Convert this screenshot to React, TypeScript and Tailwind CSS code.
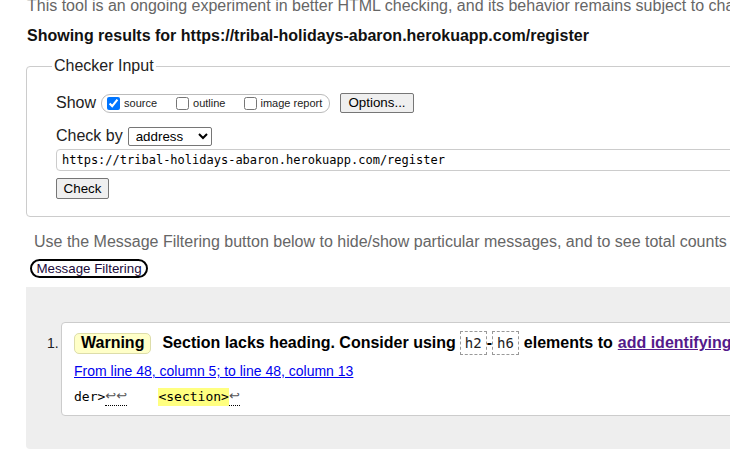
import React from "react";

export default function App() {
  const mono = "font-['DejaVu_Sans_Mono','Liberation_Mono',monospace]";
  return (
    <div className="w-[730px] h-[455px] overflow-hidden bg-white font-['Liberation_Sans',Arial,sans-serif] text-[16px] text-black">
      <div className="w-[1000px] pl-[26px]">
        <p className="mt-[-3px] ml-[1px] leading-[18px] text-[#666] whitespace-nowrap">
          This tool is an ongoing experiment in better HTML checking, and its behavior remains subject to change
        </p>
        <p className="mt-[12px] ml-[1px] leading-[18px] font-bold text-[#111] whitespace-nowrap">
          Showing results for https://tribal-holidays-abaron.herokuapp.com/register
        </p>
        <fieldset className="mt-[12px] border border-[#ccc] rounded-[4px] pl-[29px] pt-[18px] pb-[17px] w-[900px]">
          <legend className="ml-[-4px] px-[2px] leading-[18px] text-[#222]">Checker Input</legend>
          <div className="flex items-center h-[20px]">
            <span className="leading-[18px] text-[#222]">Show</span>
            <div className="ml-[5px] flex items-center h-[19px] w-[229px] border border-[#bbb] rounded-[9px] pl-[5px] text-[11px] text-[#222]">
              <input type="checkbox" defaultChecked readOnly className="w-[13px] h-[13px] m-0 accent-[#0075ff]" />
              <span className="ml-[4px] mt-[1px]">source</span>
              <input type="checkbox" readOnly className="ml-[19px] w-[13px] h-[13px] m-0" />
              <span className="ml-[4px] mt-[1px]">outline</span>
              <input type="checkbox" readOnly className="ml-[19px] w-[13px] h-[13px] m-0" />
              <span className="ml-[3px] mt-[1px]">image report</span>
            </div>
            <button className="ml-[10px] h-[20px] w-[74px] border border-[#767676] rounded-[2px] bg-[#efefef] text-[13.33px] text-black leading-[16px]">
              Options...
            </button>
          </div>
          <div className="flex items-center h-[20px] mt-[13px]">
            <span className="leading-[18px] text-[#222]">Check by</span>
            <select
              defaultValue="address"
              className="ml-[5px] h-[19px] w-[84px] border border-[#767676] rounded-[2px] bg-white text-[13.33px] pl-[3px] appearance-auto"
            >
              <option value="address">address</option>
            </select>
          </div>
          <div className="mt-[3px] flex items-center h-[22px] border border-[#ccc] rounded-l-[4px] pl-[5px] w-[900px]">
            <span className={`${mono} text-[12px] text-black whitespace-nowrap`}>
              https://tribal-holidays-abaron.herokuapp.com/register
            </span>
          </div>
          <button className="mt-[7px] h-[21px] w-[53px] border border-[#767676] rounded-[2px] bg-[#efefef] text-[13.33px] text-black leading-[16px] block">
            Check
          </button>
        </fieldset>
        <p className="mt-[16px] ml-[8px] leading-[18px] text-[#666] whitespace-nowrap">
          Use the Message Filtering button below to hide/show particular messages, and to see total counts of errors and warnings.
        </p>
        <button className="mt-[8px] ml-[4px] h-[19px] w-[118px] border-2 border-black rounded-full bg-white text-[13.33px] leading-[14px] text-[#1a0a3a] block">
          Message Filtering
        </button>
        <div className="mt-[9px] h-[162px] w-[900px] bg-[#eee] rounded-bl-[4px] flex pl-[21px] pt-[35px]">
          <div className="w-[14px] mt-[13px] text-[14px] leading-[16px] text-[#222]">1.</div>
          <div className="flex-1 h-[94px] bg-white border border-[#ccc] rounded-[4px] pl-[12px] pt-[8px]">
            <div className="flex items-center h-[24px] font-bold whitespace-nowrap">
              <span className="h-[21px] px-[6px] flex items-center bg-[#ffffc8] border border-[#ddddaa] rounded-[5px] leading-[18px]">
                Warning
              </span>
              <span className="ml-[11px]">Section lacks heading. Consider using</span>
              <code className={`${mono} font-normal ml-[4px] h-[24px] px-[4px] flex items-center border border-dashed border-[#999] text-[14px] text-[#222]`}>
                h2
              </code>
              <span>-</span>
              <code className={`${mono} font-normal h-[24px] px-[4px] flex items-center border border-dashed border-[#999] text-[14px] text-[#222]`}>
                h6
              </code>
              <span className="ml-[5px]">elements to</span>
              <a className="ml-[5px] text-[#551a8b] underline">add identifying headings to all sections</a>
            </div>
            <div className="mt-[8px] text-[14px] leading-[16px]">
              <a className="text-[#0000ee] underline">From line 48, column 5; to line 48, column 13</a>
            </div>
            <div className={`mt-[9px] ${mono} text-[13px] leading-[18px] whitespace-pre flex`}>
              <span>der&gt;</span>
              <span className="font-['DejaVu_Sans',sans-serif] text-[#555] border-b border-dotted border-black leading-[16px] h-[18px]">↩↩</span>
              <span>{"    "}</span>
              <span className="bg-[#ffff80]">&lt;section&gt;</span>
              <span className="font-['DejaVu_Sans',sans-serif] text-[#555] border-b border-dotted border-black leading-[16px] h-[18px]">↩</span>
            </div>
          </div>
        </div>
      </div>
    </div>
  );
}
